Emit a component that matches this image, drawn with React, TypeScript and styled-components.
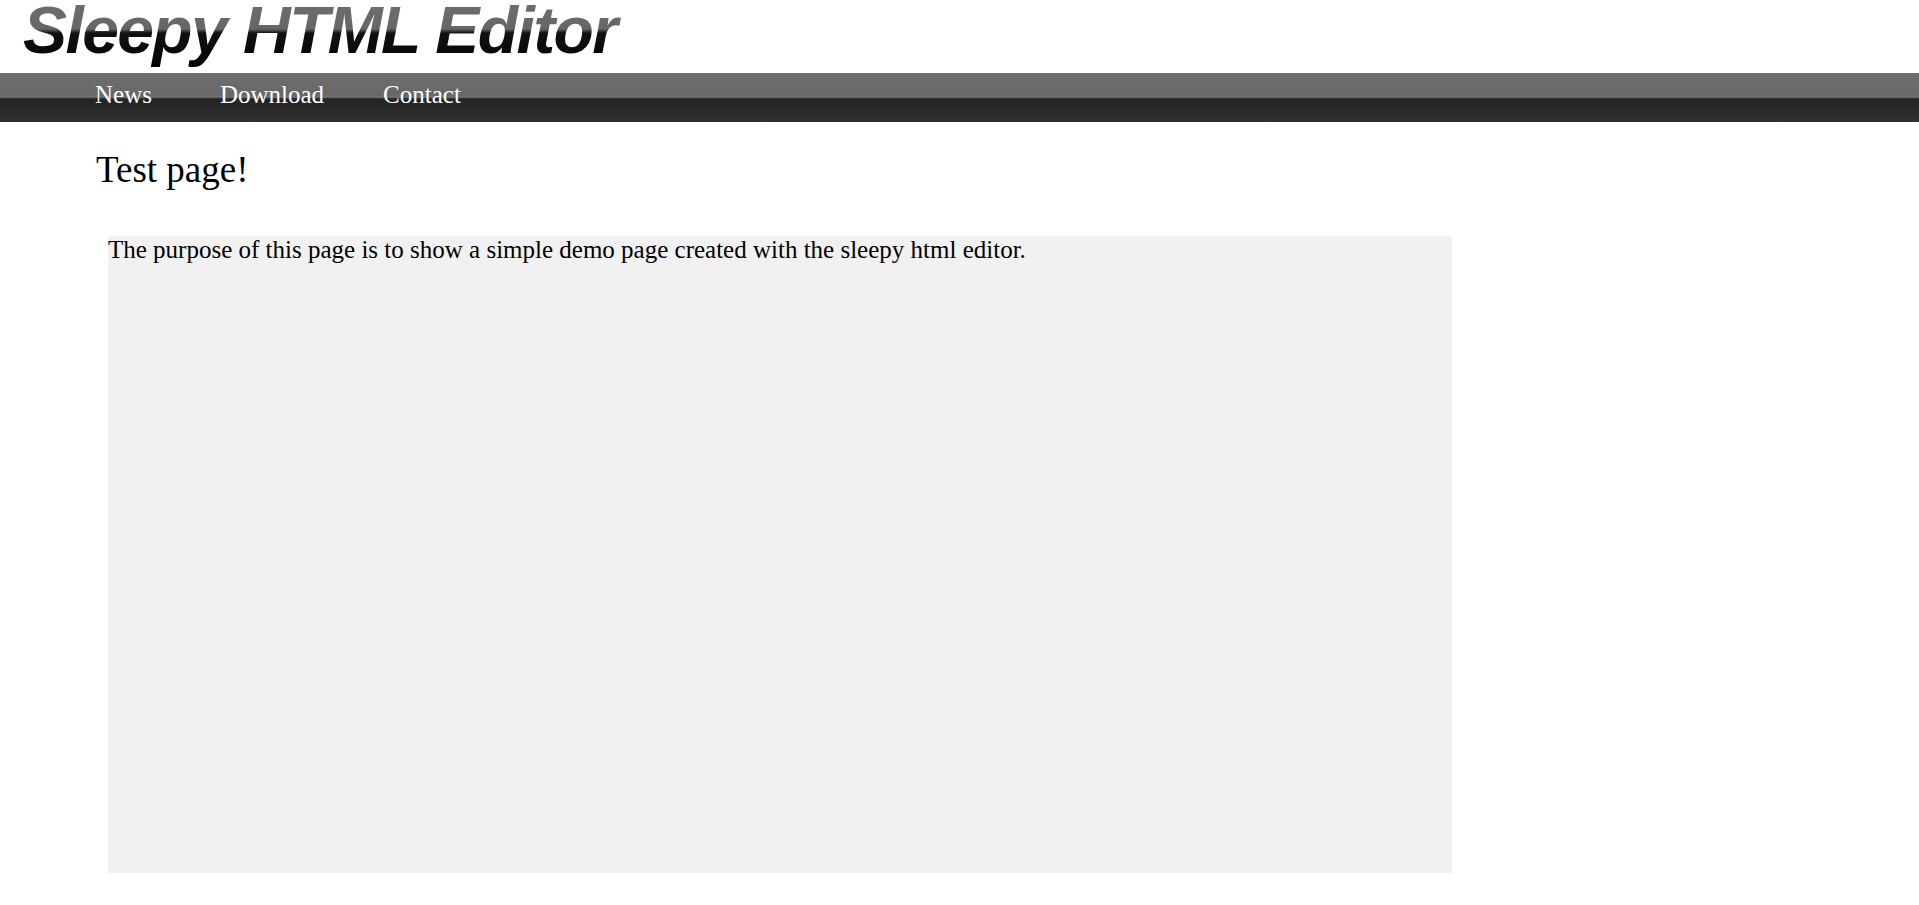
import React from 'react';
import styled, { createGlobalStyle } from 'styled-components';

const GlobalStyle = createGlobalStyle`
  html, body {
    margin: 0;
    padding: 0;
    background: #fff;
  }
  body {
    font-family: "Liberation Serif", "Times New Roman", serif;
    color: #000;
  }
`;

const Page = styled.div`
  display: flex;
  flex-direction: column;
  min-height: 905px;
`;

const Header = styled.header`
  height: 73px;
  padding-left: 23px;
  overflow: hidden;
`;

// gradient logo text: grey top half, black bottom half
const Logo = styled.h1`
  display: inline-block;
  margin: 0;
  padding: 0 8px 14px 0;
  font-family: "Liberation Sans", Arial, sans-serif;
  font-weight: bold;
  font-style: italic;
  font-size: 66px;
  line-height: 60px;
  letter-spacing: -1.6px;
  background: linear-gradient(
    to bottom,
    #6e6e6e 0,
    #666 29px,
    #111 33px,
    #000 100%
  );
  -webkit-background-clip: text;
  background-clip: text;
  color: transparent;
`;

const NavBar = styled.nav`
  height: 49px;
  display: flex;
  align-items: flex-start;
  padding-left: 95px;
  background: linear-gradient(
    to bottom,
    #6e6e6e 0,
    #686868 23px,
    #787878 24px,
    #4a4a4a 25px,
    #242424 26px,
    #2b2b2b 40px,
    #333 49px
  );
`;

const NavLink = styled.a<{ $space: number }>`
  margin-top: 9px;
  margin-right: ${(p) => p.$space}px;
  font-size: 25px;
  line-height: 25px;
  color: #fff;
  text-decoration: none;
  cursor: pointer;
`;

const Main = styled.main`
  padding: 30px 0 0 96px;
`;

const Title = styled.h2`
  margin: 0;
  font-weight: normal;
  font-size: 37px;
  line-height: 36px;
`;

const ContentBox = styled.div`
  margin: 48px 0 0 12px;
  width: 1344px;
  height: 637px;
  background: #f1f1f1;
  font-size: 25px;
`;

const links = [
  { label: 'News', space: 68 },
  { label: 'Download', space: 59 },
  { label: 'Contact', space: 0 },
];

function App(): JSX.Element {
  return (
    <Page>
      <GlobalStyle />
      <Header>
        <Logo>Sleepy HTML Editor</Logo>
      </Header>
      <NavBar>
        {links.map((l) => (
          <NavLink key={l.label} $space={l.space}>
            {l.label}
          </NavLink>
        ))}
      </NavBar>
      <Main>
        <Title>Test page!</Title>
        <ContentBox>
          The purpose of this page is to show a simple demo page created with
          the sleepy html editor.
        </ContentBox>
      </Main>
    </Page>
  );
}

export default App;
